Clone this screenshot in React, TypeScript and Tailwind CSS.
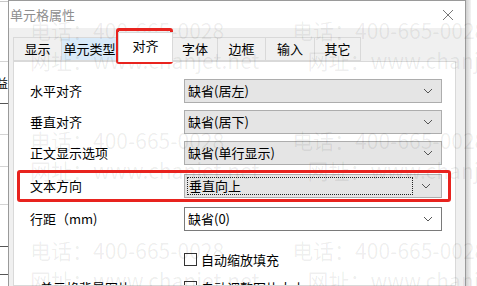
import React from 'react';

const FONT = "font-['Microsoft_YaHei','Noto_Sans_CJK_SC',sans-serif]";

const Chevron = () => (
  <svg width="10" height="6" viewBox="0 0 10 6" className="shrink-0">
    <path d="M1 1 L5 5 L9 1" fill="none" stroke="#555" strokeWidth="1" />
  </svg>
);

type SelectProps = {
  value: string;
  white?: boolean;
  focused?: boolean;
};

const Select = ({ value, white, focused }: SelectProps) => (
  <div
    className={`
      h-[24px]
      w-[258px]
      flex
      items-center
      border
      ${white ? 'bg-white border-[#7a7a7a]' : 'bg-[#e5e5e5] border-[#adadad]'}
      ${focused ? 'p-[2px]' : ''}
    `}
  >
    <div
      className={`
        flex-1
        h-full
        flex
        items-center
        ${focused ? 'border border-dotted border-[#222] pl-[1px]' : 'pl-[3px]'}
      `}
    >
      {value}
    </div>
    <div className="w-[26px] flex justify-center">
      <Chevron />
    </div>
  </div>
);

const Checkbox = ({ label }: { label: string }) => (
  <div className="flex items-center gap-[4px]">
    <div className="w-[13px] h-[13px] border border-[#333] bg-white" />
    <span>{label}</span>
  </div>
);

const tabs = [
  { name: '显示', w: 'w-[49px]' },
  { name: '单元类型', w: 'w-[56px]', hover: true },
  { name: '对齐', w: 'w-[55px]', active: true },
  { name: '字体', w: 'w-[45px]' },
  { name: '边框', w: 'w-[48px]' },
  { name: '输入', w: 'w-[49px]' },
  { name: '其它', w: 'w-[46px]' },
];

const Watermark = ({ top }: { top: string }) => (
  <div className={`absolute left-0 right-0 ${top} flex flex-col gap-[6px]`}>
    <div className="flex gap-[68px] pl-[30px] h-[24px] items-center">
      <span>电话：400-665-0028</span>
      <span>电话：400-665-0028</span>
    </div>
    <div className="flex gap-[48px] pl-[30px] h-[24px] items-center">
      <span>网址：www.chanjet.net</span>
      <span>网址：www.chanjet.net</span>
    </div>
  </div>
);

export default function App() {
  return (
    <div className={`relative w-[477px] h-[286px] overflow-hidden bg-white flex text-[13px] text-black ${FONT}`}>
      {/* sheet behind */}
      <div className="w-[8px] shrink-0 flex flex-col">
        <div className="h-[2px] shrink-0 border-b border-[#c8c8c8]" />
        <div className="h-[60px] shrink-0 border-b border-[#d4d4d4]" />
        <div className="h-[42px] shrink-0 border-b border-[#555] text-[12px] leading-[42px] -ml-[4px]">益</div>
        <div className="h-[31px] shrink-0 border-b border-[#d4d4d4]" />
        <div className="h-[32px] shrink-0 border-b border-[#d4d4d4]" />
        <div className="h-[38px] shrink-0 border-b border-[#d4d4d4]" />
        <div className="h-[42px] shrink-0 border-b border-[#555]" />
        <div className="h-[28px] shrink-0 border-b border-[#555]" />
      </div>

      {/* dialog */}
      <div className="w-[458px] shrink-0 flex flex-col border-l border-t border-r border-[#9a9a9a] bg-[#f0f0f0]">
        <div className="h-[27px] shrink-0 bg-white flex items-center justify-between pl-[1px] pr-[11px]">
          <span className="text-[#8f8f8f]">单元格属性</span>
          <svg width="12" height="12" viewBox="0 0 12 12">
            <path d="M1 1 L11 11 M11 1 L1 11" stroke="#777" strokeWidth="1" />
          </svg>
        </div>

        <div className="flex items-end h-[33px] shrink-0 pl-[4px]">
          {tabs.map((t) =>
            t.active ? (
              <div
                key={t.name}
                className={`${t.w} h-[30px] -mb-[1px] relative z-10 bg-white border border-b-0 border-[#d9d9d9] flex items-center justify-center pb-[4px]`}
              >
                {t.name}
              </div>
            ) : (
              <div
                key={t.name}
                className={`${t.w} h-[24px] border border-l-0 first:border-l border-[#d9d9d9] ${t.hover ? 'bg-[#d8eaf9]' : 'bg-[#f0f0f0]'} flex items-center justify-center`}
              >
                {t.name}
              </div>
            ),
          )}
        </div>

        <div className="ml-[4px] mr-[9px] flex-1 min-h-0 overflow-hidden bg-white border border-[#d9d9d9] pt-[17px] pl-[16px]">
          <div className="grid grid-cols-[154px_258px] items-center">
            <span>水平对齐</span>
            <Select value="缺省(居左)" />
            <div className="col-span-2 h-[7px]" />
            <span>垂直对齐</span>
            <Select value="缺省(居下)" />
            <div className="col-span-2 h-[7px]" />
            <span>正文显示选项</span>
            <Select value="缺省(单行显示)" />
            <div className="col-span-2 h-[9px]" />
            <span>文本方向</span>
            <Select value="垂直向上" focused />
            <div className="col-span-2 h-[9px]" />
            <span>行距（mm)</span>
            <Select value="缺省(0)" white />
            <div className="col-span-2 h-[19px]" />
            <span />
            <Checkbox label="自动缩放填充" />
            <div className="col-span-2 h-[8px]" />
            <span className="pl-[10px]">单元格背景图片</span>
            <Checkbox label="自动调整图片大小" />
          </div>
        </div>
      </div>

      {/* shadow */}
      <div className="w-[5px] shrink-0 bg-gradient-to-r from-[#d0d0d0] to-[#f4f4f4]" />
      <div className="flex-1 bg-white" />

      {/* watermark */}
      <div className="absolute inset-0 pointer-events-none text-[21px] leading-[24px] text-black/[0.07] whitespace-nowrap">
        <Watermark top="top-[18px]" />
        <Watermark top="top-[128px]" />
        <Watermark top="top-[238px]" />
      </div>

      {/* annotations */}
      <div className="absolute left-[116px] top-[28px] w-[57px] h-[36px] border-[3px] border-[#e8231e] rounded-[3px] pointer-events-none" />
      <div className="absolute left-[17px] top-[170px] w-[434px] h-[32px] border-[3px] border-[#e8231e] rounded-[3px] pointer-events-none" />
    </div>
  );
}
